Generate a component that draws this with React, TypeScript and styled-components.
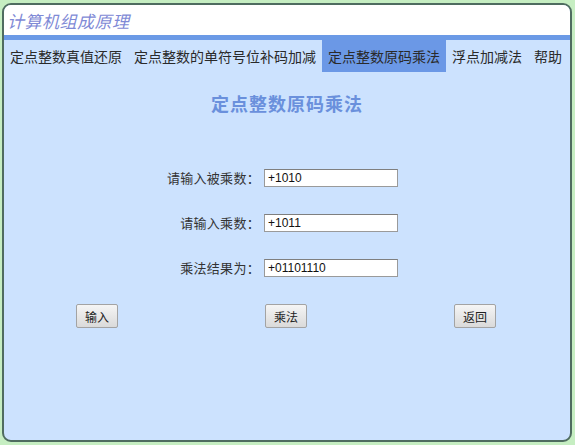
import { useState } from 'react';
import { styled, createGlobalStyle } from 'styled-components';

const GlobalStyle = createGlobalStyle`
    html, body {
        margin: 0;
        padding: 0;
        background: #c6eec2;
    }
    * {
        box-sizing: border-box;
    }
`

const tabs = [
    '定点整数真值还原',
    '定点整数的单符号位补码加减',
    '定点整数原码乘法',
    '浮点加减法',
    '帮助',
];

const fields = [
    { label: '请输入被乘数：', value: '+1010' },
    { label: '请输入乘数：', value: '+1011' },
    { label: '乘法结果为：', value: '+01101110' },
];

function App() {
    const [active, setActive] = useState(2);

    return (
        <>
            <GlobalStyle />
            <Page>
                <Panel>
                    <Header>
                        <AppTitle>计算机组成原理</AppTitle>
                    </Header>
                    <AccentBar />
                    <NavBar>
                        {tabs.map((t, i) => (
                            <Tab key={t} $active={i === active} onClick={() => setActive(i)}>
                                {t}
                            </Tab>
                        ))}
                    </NavBar>
                    <Content>
                        <PageTitle>定点整数原码乘法</PageTitle>
                        <FormGrid>
                            {fields.map((f) => (
                                <FormRow key={f.label}>
                                    <Label>{f.label}</Label>
                                    <Input defaultValue={f.value} />
                                </FormRow>
                            ))}
                        </FormGrid>
                        <ButtonRow>
                            <Button>输入</Button>
                            <Button>乘法</Button>
                            <Button>返回</Button>
                        </ButtonRow>
                    </Content>
                </Panel>
            </Page>
        </>
    )
}

export default App;

const cjk = `"Noto Sans CJK SC", "Noto Sans", sans-serif`;

const Page = styled.div`
    width: 575px;
    height: 445px;
    padding: 3px 3px 3px 2px;
`

const Panel = styled.div`
    display: flex;
    flex-direction: column;
    width: 100%;
    height: 100%;
    border: 2px solid #4f6c60;
    border-radius: 9px;
    overflow: hidden;
    background: #cce2fe;
`

const Header = styled.div`
    display: flex;
    align-items: center;
    height: 30px;
    padding-left: 3px;
    background: #fff;
`

const AppTitle = styled.div`
    font-family: ${cjk};
    font-size: 17px;
    font-style: italic;
    color: #7f8ad6;
    letter-spacing: 0.5px;
`

const AccentBar = styled.div`
    height: 5px;
    background: #6b9ae6;
`

const NavBar = styled.div`
    display: flex;
    height: 32px;
`

const Tab = styled.div<{ $active: boolean }>`
    display: flex;
    align-items: center;
    padding: 0 6px;
    font-family: ${cjk};
    font-size: 14px;
    color: #2a2a2a;
    white-space: nowrap;
    cursor: pointer;
    background: ${(p) => (p.$active ? '#6b98e6' : 'transparent')};
`

const Content = styled.div`
    display: flex;
    flex-direction: column;
    flex: 1 0 0;
    padding-top: 19px;
`

const PageTitle = styled.div`
    align-self: center;
    height: 24px;
    line-height: 24px;
    font-family: ${cjk};
    font-size: 18px;
    font-weight: 700;
    color: #6a90dc;
    letter-spacing: 1px;
`

const FormGrid = styled.div`
    display: flex;
    flex-direction: column;
    gap: 27px;
    margin-top: 54px;
    margin-left: 157px;
`

const FormRow = styled.div`
    display: grid;
    grid-template-columns: 99px 134px;
    column-gap: 4px;
    align-items: center;
    height: 18px;
`

const Label = styled.div`
    text-align: right;
    font-family: ${cjk};
    font-size: 13px;
    line-height: 18px;
    color: #333;
    letter-spacing: 0.3px;
`

const Input = styled.input`
    width: 134px;
    height: 18px;
    padding: 0 3px;
    border: 1px solid #9a9a9a;
    border-top-color: #7f7f7f;
    background: #fff;
    font-family: "Liberation Sans", Arial, sans-serif;
    font-size: 12px;
    color: #111;
    outline: none;
`

const ButtonRow = styled.div`
    display: flex;
    gap: 147px;
    margin-top: 27px;
    margin-left: 72px;
`

const Button = styled.button`
    width: 42px;
    height: 24px;
    padding: 0;
    border: 1px solid #a3a3a3;
    border-radius: 2px;
    background: linear-gradient(#f5f5f5, #dadada);
    font-family: ${cjk};
    font-size: 12px;
    color: #222;
    cursor: pointer;
`
